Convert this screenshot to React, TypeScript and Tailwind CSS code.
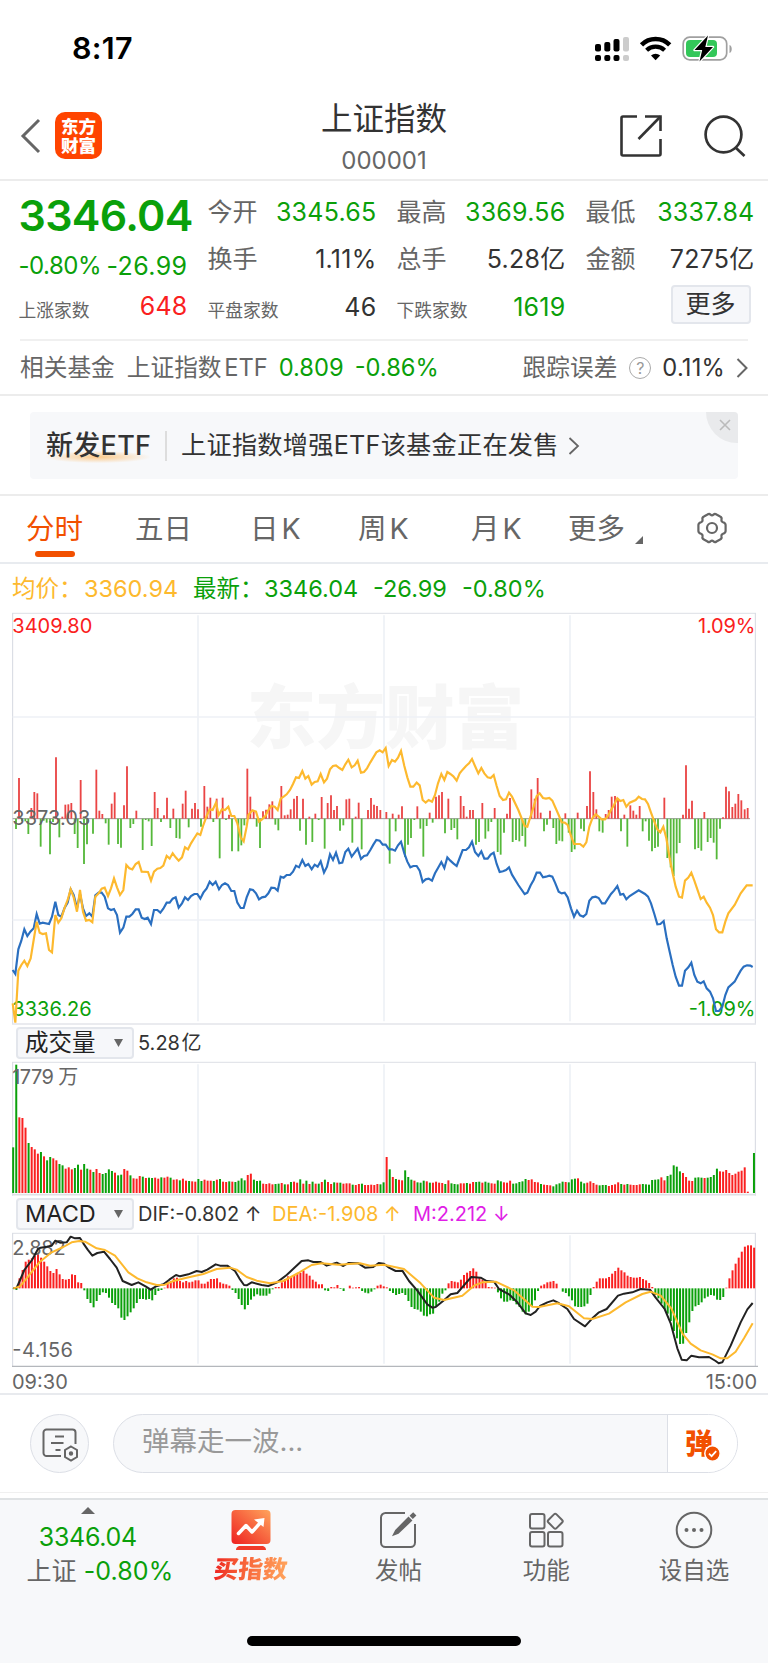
import React from "react";

const RED = "#fa2020";
const GREEN = "#0aa00a";
const STEP = 9.26;

// Price chart, chart units are a third of a pixel
const latest =
  "38,1080 46,1092 55,1018 64,992 73,958 82,978 91,965 101,955 110,912 119,941 128,938 147,942 156,920 166,875 175,915 184,920 194,893 203,878 212,838 221,855 231,895 240,852 249,895 258,918 268,910 277,920 286,856 296,848 305,848 314,860 324,895 333,900 342,897 351,915 360,968 370,953 379,920 388,920 397,912 407,898 416,898 425,923 434,927 443,923 453,942 462,900 472,900 481,908 490,896 500,878 509,878 518,866 527,862 536,893 546,880 555,862 564,870 573,858 583,852 592,852 601,866 610,848 620,835 629,815 638,825 647,815 657,838 666,825 675,820 684,825 694,843 703,843 712,878 722,894 731,894 740,862 750,838 759,840 768,850 777,868 786,862 796,860 805,850 814,833 824,834 833,842 842,800 851,803 860,795 870,795 879,785 888,767 897,772 907,750 916,768 925,762 935,778 944,764 953,770 962,754 972,788 981,770 990,733 999,750 1008,728 1018,760 1027,758 1036,726 1045,716 1055,740 1064,728 1073,716 1083,747 1092,738 1101,736 1111,720 1120,704 1129,690 1139,692 1148,704 1157,704 1167,718 1176,718 1185,722 1194,706 1203,695 1213,730 1222,755 1231,772 1240,768 1250,768 1259,782 1268,816 1277,808 1286,806 1296,812 1305,790 1314,774 1324,756 1333,774 1342,742 1351,752 1360,760 1370,768 1379,744 1388,720 1398,720 1407,712 1416,695 1425,726 1435,738 1444,724 1453,746 1463,746 1472,734 1481,728 1490,762 1499,786 1509,784 1518,780 1527,772 1536,794 1555,825 1574,852 1582,848 1592,826 1601,810 1610,788 1620,788 1629,802 1638,800 1648,797 1657,800 1666,820 1676,845 1685,850 1694,848 1703,862 1713,895 1722,920 1731,902 1740,916 1750,920 1759,912 1768,872 1777,862 1787,860 1796,864 1806,880 1815,880 1824,866 1833,852 1842,842 1852,828 1861,854 1870,852 1879,868 1889,858 1916,841 1935,852 1944,860 1953,880 1963,912 1972,943 1981,942 1991,933 2000,985 2009,1025 2018,1065 2027,1100 2037,1127 2046,1127 2055,1082 2065,1072 2074,1058 2083,1095 2092,1115 2102,1120 2111,1114 2120,1135 2130,1145 2139,1165 2148,1203 2157,1203 2167,1190 2176,1155 2185,1132 2204,1115 2213,1098 2222,1082 2231,1070 2241,1066 2251,1067 2258,1071";
const average =
  "38,1180 46,1238 55,1082 64,1065 73,1052 82,1068 92,1045 101,990 110,935 119,968 128,972 138,970 147,1020 156,1027 166,915 175,938 184,925 194,893 203,870 212,838 221,862 231,905 240,840 249,905 258,932 268,930 277,937 286,860 296,850 305,836 314,833 324,858 333,835 342,805 351,832 360,855 370,840 379,765 388,775 397,778 407,762 416,756 425,785 444,786 453,812 462,785 472,776 481,774 490,767 500,738 509,746 518,730 527,742 536,752 546,742 555,712 564,718 573,700 583,684 592,670 601,675 610,645 620,618 629,598 638,600 648,578 656,615 666,598 675,600 685,590 694,618 703,618 712,640 722,682 731,694 740,650 745,615 757,601 768,605 777,635 786,628 796,618 805,600 814,588 824,590 833,600 842,566 851,560 860,553 870,540 879,522 888,502 897,504 907,483 916,506 925,498 935,524 944,516 953,514 962,492 972,517 981,506 990,478 999,468 1008,466 1018,474 1027,480 1036,463 1045,449 1055,472 1064,466 1073,452 1083,488 1092,486 1101,475 1111,457 1120,442 1129,427 1139,421 1148,427 1157,414 1166,468 1176,450 1185,455 1194,443 1203,423 1213,468 1222,502 1231,530 1240,530 1250,518 1259,526 1268,570 1277,578 1286,570 1296,575 1305,555 1314,520 1324,492 1333,510 1342,486 1351,492 1360,499 1370,512 1379,490 1388,479 1398,468 1407,460 1416,447 1425,468 1435,490 1444,474 1453,490 1463,502 1472,504 1481,495 1490,528 1499,558 1509,570 1518,568 1527,548 1536,560 1555,600 1574,648 1582,650 1592,618 1601,590 1610,558 1619,550 1629,564 1638,566 1648,564 1657,572 1676,615 1685,637 1694,638 1703,645 1713,678 1722,702 1740,702 1750,710 1759,697 1768,650 1777,625 1787,613 1796,620 1805,628 1815,628 1824,618 1833,600 1842,585 1852,565 1861,573 1870,570 1879,590 1889,578 1907,570 1916,560 1926,567 1935,568 1944,582 1953,608 1963,635 1972,658 1981,667 1990,650 1999,685 2009,745 2018,790 2027,830 2037,860 2046,863 2055,812 2065,803 2074,788 2083,812 2092,838 2102,867 2111,860 2120,878 2130,893 2139,915 2148,958 2157,967 2167,967 2176,935 2185,910 2204,885 2222,850 2240,826 2258,826";

// [offset, pairs of x and signed height]
const flow: [number, number[]][] = [
  [0, [57,122,94,32,103,80,112,76,168,184,187,6,196,42,205,43,214,47,242,116,289,147,298,24,307,14,335,45,344,79,372,40,381,157,409,24,464,80,473,32,492,10,501,63,520,30,548,45,557,84,576,30,585,47,594,28,613,98,622,36,631,63,650,60,668,63,687,12,742,150,751,66,761,24]],
  [0, [48,-31,66,-8,76,-8,85,-46,122,-84,131,-6,140,-12,150,-107,159,-10,178,-56,224,-46,233,-88,252,-136,261,-77,279,-45,317,-14,326,-78,354,-76,363,-87,391,-28,400,-16,428,-94,437,-4,446,-8,455,-82,483,-10,511,-28,529,-58,539,-60,566,-26,603,-24,640,-10,659,-119,678,-4,696,-98,715,-98,724,-80,733,-20]],
  [768, [21,22,30,27,40,43,49,52,76,98,86,10,95,12,104,28,114,60,123,68,141,60,160,6,178,15,197,65,215,47,225,70,234,26,243,38,271,58,280,60,299,6,308,48,336,26,345,62,354,42,363,38,373,26,391,20,410,15,428,12,438,37,484,37,521,18,540,66,549,70,558,80,577,60,614,68,623,38,632,6,642,26,651,26,679,47,716,32,753,15,762,62]],
  [768, [2,-24,12,-88,58,-18,67,-35,132,-36,150,-78,169,-70,188,-4,206,-90,252,-36,262,-20,289,-72,317,-92,401,-135,419,-38,447,-115,456,-78,465,-58,475,-4,493,-30,502,-114,512,-22,530,-12,567,-44,586,-34,595,-28,604,-62,660,-78,669,-70,688,-60,697,-38,706,-10,725,-100,734,-108,744,-42]],
  [1536, [58,88,68,60,77,122,86,18,114,24,160,16,197,18,225,38,234,142,244,80,253,28,281,14,290,26,299,66,309,68,318,60,337,12,355,40,364,24,373,12,383,38,457,63,513,12,522,160,531,30,540,54,577,20,633,4,642,96,651,82,661,35,670,45,679,74,688,55,698,28,707,32]],
  [1536, [2,-70,12,-64,22,-68,31,-52,40,-84,96,-38,105,-18,124,-28,133,-76,142,-66,151,-68,170,-42,179,-100,188,-92,207,-30,216,-38,262,-38,272,-42,327,-38,346,-84,392,-38,401,-8,411,-66,420,-98,429,-88,438,-84,466,-118,476,-146,485,-172,494,-104,503,-73,549,-92,559,-88,568,-96,587,-70,596,-58,605,-72,614,-122,624,-30]],
];

// r = up minute, g = down minute
const volume =
  "g137 g385 r227 r225 r196 g150 r138 r131 r118 g123 r110 g98 g108 r104 r98 g87 g83 r73 r77 r71 g75 g85 r70 g87 g73 r70 g63 r72 r60 g57 g60 g71 g66 r61 g53 g55 r72 r67 g53 r44 r43 r51 g49 r45 g46 g45 r46 r43 g47 r46 r49 g46 r40 r41 g38 r43 r37 g36 r35 r34 g42 g36 r40 r37 r37 g36 r40 g42 r34 r33 g35 r34 g33 g37 g44 g38 r54 r58 g40 g36 g37 r28 r27 r29 r26 g27 g28 r30 g26 r26 g33 r34 r31 g41 r28 g37 r27 g34 r28 g28 r33 g40 r33 r27 g32 r31 g31 r28 r29 r29 g25 r24 r27 g28 r24 r24 r25 r24 r27 g26 g32 r108 g71 r48 g42 r40 r38 g68 g48 g40 r37 g32 g31 g37 r35 g31 r31 r34 r31 r30 g27 r38 g29 g27 g26 r29 r29 g30 r28 r33 g33 g34 r31 g34 g31 r29 r28 g38 g35 r32 r31 r37 g28 g29 g33 g35 g42 r39 r41 r33 r32 g27 r25 r24 r23 g20 g26 g29 g34 r33 g32 g41 g43 r44 g34 g29 r31 r35 r30 r25 g23 g24 g24 r21 r24 r26 r32 g27 r25 g27 r25 r24 r24 r26 g27 g26 g25 g39 g40 g41 r47 r38 g51 g55 g83 g79 g65 r60 r48 r37 r36 g46 g47 g46 r45 g46 g48 g54 g73 r65 r64 r69 r60 r54 r58 r64 r67 r77 r4 r0 g120";

const macd = [
  -1, -5, 30, 55, 80, 86, 90, 98, 102, 92, 80, 66, 52, 46, 58, 42, 28, 26, 28, 42, 40, 18, 16, -6, -32, -44, -57, -38, -20, -12, -14, -28, -44, -50, -60, -88, -95, -84, -72, -60, -44, -32, -32, -34, -32, -36, -20, -8, -5, 2, 18, 22, 30, 32, 22, 18, 22, 18, 20, 24, 24, 14, 14, 20, 28, 28, 30, 18, 14, 12, 8, -5, -14, -32, -50, -63, -50, -34, -24, -18, -22, -22, -22, -16, -3, 4, 4, 18, 28, 36, 36, 40, 46, 46, 53, 44, 38, 26, 20, 12, 12, -6, -8, 4, 3, 10, -2, -8, 0, 8, 2, 3, 4, -8, -13, -15, -10, -3, 8, 11,
  6, 3, -8, -14, -20, -17, -14, -20, -38, -56, -62, -64, -70, -82, -84, -78, -76, -56, -40, -16, -6, 15, 22, 20, 18, 26, 40, 47, 52, 60, 50, 32, 26, 16, 4, 3, 2, -12, -30, -40, -40, -36, -38, -48, -56, -70, -78, -70, -54, -36, -8, 8, 12, 18, 20, 22, 14, 0, -10, -14, -24, -36, -54, -56, -56, -54, -46, -20, 4, 20, 30, 30, 30, 34, 44, 52, 62, 54, 48, 38, 34, 32, 32, 34, 28, 24, 16, 4, -20, -30, -46, -62, -76, -98, -128, -150, -167, -166, -134, -102, -68, -54, -50, -42, -30, -25, -20, -22, -34, -35, -26, 2, 30, 54, 74, 92, 110, 125, 129, 129, 122,
];
const dif =
  "40,790 50,788 59,768 73,735 96,705 114,672 122,668 140,665 155,662 166,647 180,653 200,652 212,635 225,640 240,639 250,655 263,674 277,692 292,684 312,680 330,702 350,728 368,768 395,780 415,772 438,785 452,794 468,784 490,778 508,764 528,750 540,754 565,748 590,738 605,741 622,734 647,718 660,722 682,722 705,738 718,760 732,780 740,781 755,772 785,780 805,783 830,773 860,750 888,724 905,708 925,706 940,711 962,711 980,722 1010,713 1030,723 1045,714 1075,715 1095,728 1120,726 1136,714 1152,716 1167,728 1187,738 1207,737 1227,768 1252,797 1282,838 1297,848 1307,846 1332,826 1352,808 1372,804 1397,775 1414,756 1442,758 1460,768 1482,770 1497,792 1527,808 1552,832 1577,865 1592,870 1607,860 1620,843 1642,832 1660,826 1674,833 1702,852 1722,882 1755,904 1777,880 1797,862 1820,852 1854,812 1872,806 1897,802 1922,792 1950,794 1967,818 1994,852 2012,895 2032,970 2045,1004 2060,1006 2074,992 2097,997 2127,996 2147,1008 2156,1015 2167,1012 2192,962 2222,892 2242,853 2258,834";
const dea =
  "40,790 60,784 80,760 120,710 155,682 190,666 215,652 238,648 255,650 290,670 315,675 345,692 385,742 412,760 440,772 470,780 495,779 520,768 560,758 610,747 650,732 690,728 710,734 740,756 770,767 810,775 850,768 895,744 935,720 965,715 1015,719 1080,715 1110,722 1152,719 1212,732 1262,775 1302,818 1332,825 1387,812 1422,782 1447,772 1487,770 1542,796 1597,845 1617,846 1672,835 1707,844 1752,880 1777,882 1827,866 1877,832 1927,807 1952,800 1982,812 2014,850 2047,925 2072,956 2102,976 2137,988 2162,1000 2182,1000 2207,980 2232,940 2258,895";

const tabs = [
  { label: "分时", className: "w-[57px] ml-[26px] text-[#f25000]" },
  { label: "五日", className: "w-[57px] ml-[52px]" },
  { label: "日 K", className: "w-[50px] ml-[58px]" },
  { label: "周 K", className: "w-[54px] ml-[58px]" },
  { label: "月 K", className: "w-[52px] ml-[59px]" },
  { label: "更多", className: "w-[58px] ml-[45px]" },
];

const StatusIcons = () => (
  <svg className="mr-[35px] h-[28px] w-[140px]" viewBox="0 0 140 28" fill="none">
    {/* signal */}
    <g fill="#000">
      <rect x="2" y="9" width="6" height="7.5" rx="2" />
      <rect x="11.3" y="7" width="6" height="9.500" rx="2" />
      <rect x="20.500" y="4" width="6" height="12.500" rx="2" />
      <rect x="2" y="20" width="6" height="6" rx="2" />
      <rect x="11.300" y="20" width="6" height="6" rx="2" />
      <rect x="20.500" y="20" width="6" height="6" rx="2" />
    </g>
    <rect x="30" y="2" width="6" height="14.500" rx="2" fill="#ccc" />
    <rect x="30" y="20" width="6" height="6" rx="2" fill="#ccc" />
    {/* wifi */}
    <path d="M48.500 9.800a20 20 0 0 1 28.200 0" stroke="#000" strokeWidth="4.600" />
    <path d="M53.600 15.200a13 13 0 0 1 18 0" stroke="#000" strokeWidth="4.200" />
    <path d="M62.600 25.200l-4.600-4.700a6.600 6.600 0 0 1 9.200 0z" fill="#000" />
    {/* battery */}
    <rect x="90.200" y="2.200" width="43.500" height="22.600" rx="6.500" stroke="#a0a0a0" strokeWidth="1.700" />
    <path d="M136.500 10v8c3-1 3-7 0-8z" fill="#a0a0a0" />
    <rect x="93" y="5" width="31" height="17" rx="4" fill="#33c759" />
    <path
      d="M115 .5l-13.500 14.600h7.700L106.500 26.500 120 12h-7.700z"
      fill="#000"
      stroke="#fff"
      strokeWidth="2.400"
      paintOrder="stroke"
      strokeLinejoin="round"
    />
  </svg>
);

const Header = () => (
  <header className="grid h-[97px] grid-cols-3 items-center border-b-2 border-[#ececec]">
    <div className="flex items-center pl-[20px] pt-[8px]">
      <svg className="h-[36px] w-[21px]" viewBox="0 0 21 36" fill="none">
        <path d="M19 2L3 18l16 16" stroke="#666" strokeWidth="3" />
      </svg>
      <div className="ml-[14px] flex size-[47px] flex-col items-center justify-center rounded-[10px] bg-[#ff4400] text-[17.5px] font-black leading-[19px] text-white">
        <span>东方</span>
        <span>财富</span>
      </div>
    </div>
    <div className="flex flex-col items-center pt-[12px]">
      <h1 className="text-[31.500px] leading-[40px] text-[#333]">上证指数</h1>
      <p className="mt-[7px] text-[24px] leading-[30px] text-[#666]">000001</p>
    </div>
    <div className="flex justify-end pr-[22px] pt-[8px]">
      <svg className="mr-[41px] h-[44px] w-[44px]" viewBox="0 0 44 44" fill="none" stroke="#333" strokeWidth="2.600">
        <path d="M18 2.500H4a1.500 1.500 0 0 0-1.500 1.500v36A1.500 1.500 0 0 0 4 41.500h36a1.500 1.500 0 0 0 1.500-1.500V25" />
        <path d="M26 2.500h15.500V17" />
        <path d="M41.500 2.500L19.500 25" />
      </svg>
      <svg className="h-[44px] w-[42px]" viewBox="0 0 42 44" fill="none" stroke="#333" strokeWidth="2.700">
        <circle cx="19.500" cy="20.500" r="17.900" />
        <path d="M31.500 33.500l9 8.500" />
      </svg>
    </div>
  </header>
);

const Quote = ({ label, value, className = "text-[#333]", small = false }: { label: string; value: string; className?: string; small?: boolean }) => (
  <div className="flex h-[47.300px] items-center justify-between whitespace-nowrap leading-none">
    <span className={small ? "mt-[8px] text-[17.800px] text-[#666]" : "text-[25px] text-[#666]"}>{label}</span>
    <span className={`text-[25px] tracking-[0.25px] ${className}`}>{value}</span>
  </div>
);

const Quotes = () => (
  <section className="h-[215px] border-b-2 border-[#ececec]">
    <div className="grid h-[158px] grid-cols-[169px_169px_169px_169px] gap-x-5 pl-[18.500px] pt-[8px]">
      <div className="whitespace-nowrap text-[#0aa00a]">
        <div className="h-[56px] text-[43px] font-semibold leading-[53px] tracking-[-0.700px]">3346.04</div>
        <div className="flex h-[38px] items-center justify-between pt-[4px] text-[25px] leading-none">
          <span className="text-[24px] tracking-[-0.500px]">-0.80%</span>
          <span className="tracking-[0.400px]">-26.99</span>
        </div>
        <Quote label="上涨家数" value="648" className="text-[#fa2020]" small />
      </div>
      <div>
        <Quote label="今开" value="3345.65" className="text-[#0aa00a]" />
        <Quote label="换手" value="1.11%" />
        <Quote label="平盘家数" value="46" small />
      </div>
      <div>
        <Quote label="最高" value="3369.56" className="text-[#0aa00a]" />
        <Quote label="总手" value="5.28亿" />
        <Quote label="下跌家数" value="1619" className="text-[#0aa00a]" small />
      </div>
      <div>
        <Quote label="最低" value="3337.84" className="text-[#0aa00a]" />
        <Quote label="金额" value="7275亿" />
        <div className="mr-[4px] mt-[1px] flex justify-end">
          <button className="h-[39px] w-[80px] rounded-[4px] border-2 border-[#e3e6ec] bg-[#f6f7fa] text-[25px] leading-none text-[#333]">更多</button>
        </div>
      </div>
    </div>
    <div className="mx-5 flex h-[55px] items-center border-t-2 border-[#f0f0f0] text-[23.700px] leading-none text-[#666]">
      <span>相关基金</span>
      <span className="ml-[12px] whitespace-nowrap [word-spacing:-4px]">上证指数 ETF</span>
      <span className="ml-[11px] text-[#0aa00a]">0.809</span>
      <span className="ml-[11px] text-[#0aa00a]">-0.86%</span>
      <span className="ml-auto">跟踪误差</span>
      <span className="ml-[12px] flex size-[22px] items-center justify-center rounded-full border-[1.500px] border-[#aaa] text-[16px] text-[#999]">?</span>
      <span className="ml-[11px] tracking-[0.200px] text-[#333]">0.11%</span>
      <svg className="ml-[11px] h-[20px] w-[12px]" viewBox="0 0 12 20" fill="none">
        <path d="M1.500 1l9 9-9 9" stroke="#666" strokeWidth="2" />
      </svg>
    </div>
  </section>
);

const Banner = () => (
  <section className="h-[100px] border-b-2 border-[#ececec] pl-[30px] pt-[16px]">
    <div className="relative flex h-[67px] w-[708px] items-center overflow-hidden rounded-[4px] bg-[#f7f8fa] pl-[16px] text-[25.200px] leading-none text-[#333]">
      <div className="absolute left-[16px] top-[39px] h-[12px] w-[104px] bg-[radial-gradient(ellipse_at_center,#fbc98a_0%,#f7f8fa_72%)]" />
      <span className="relative w-[105px] whitespace-nowrap text-[27px] font-medium tracking-[0.300px]">新发ETF</span>
      <span className="ml-[14px] h-[30px] w-[2px] bg-[#ddd]" />
      <span className="ml-[14px] whitespace-nowrap tracking-[0.250px]">上证指数增强ETF该基金正在发售</span>
      <svg className="ml-[9px] h-[18px] w-[12px]" viewBox="0 0 12 18" fill="none">
        <path d="M1.500 1l8.500 8-8.500 8" stroke="#666" strokeWidth="1.800" />
      </svg>
      <div className="absolute right-0 top-0 flex h-[31px] w-[32px] items-center justify-center rounded-bl-full bg-[#e9eaec] pb-[5px] pl-[5px]">
        <svg className="size-[12px]" viewBox="0 0 12 12" stroke="#bbb" strokeWidth="1.600">
          <path d="M1 1l10 10M11 1L1 11" />
        </svg>
      </div>
    </div>
  </section>
);

const Tabs = () => (
  <nav className="flex h-[68px] items-center border-b-2 border-[#e8ebef] text-[28.500px] leading-none text-[#666]">
    {tabs.map((tab, index) => (
      <div key={tab.label} className={`relative shrink-0 whitespace-nowrap [word-spacing:-5px] ${tab.className}`}>
        {tab.label}
        {index === 0 && <span className="absolute -bottom-[14px] left-[9px] h-[6px] w-[40px] rounded-[3px] bg-[#f25000]" />}
      </div>
    ))}
    <svg className="ml-[9px] mt-[21px] size-[8px]" viewBox="0 0 8 8">
      <path d="M8 0v8H0z" fill="#666" />
    </svg>
    <svg className="-mt-[2px] ml-[52px] size-[34px]" viewBox="0 0 34 34" fill="none" stroke="#666" strokeWidth="2.200">
      <path
        d="M12.500 3.500q1.800-1.300 3 .2 1.500 1.300 3 0 1.200-1.500 3-.2l3.600 2q2 1 1.400 3-.4 2 1.500 2.800 2.600.7 2.600 2.700v6q0 2-2.600 2.700-1.900.8-1.500 2.800.6 2-1.400 3l-3.600 2q-1.800 1.300-3-.2-1.500-1.300-3 0-1.200 1.500-3 .2l-3.600-2q-2-1-1.400-3 .4-2-1.500-2.800Q3.400 22 3.400 20v-6q0-2 2.600-2.700 1.900-.8 1.500-2.800-.6-2 1.400-3z"
        strokeLinejoin="round"
      />
      <circle cx="17" cy="17" r="5" />
    </svg>
  </nav>
);

const Grid = ({ top, bottom }: { top: number; bottom: number }) => (
  <g stroke="#eef1f6" strokeWidth="5">
    <path d={`M594 ${top + 6}V${bottom - 8}M1152 ${top + 6}V${bottom - 8}M1710 ${top + 6}V${bottom - 8}`} />
    <path d={`M36 ${top}H2268`} stroke="#e3e5ea" strokeWidth="4" />
    <path d={`M38 ${top}V${bottom}M2266 ${top}V${bottom}`} stroke="#d5d8e0" strokeWidth="3" />
  </g>
);

const PriceChart = () => (
  <svg className="block h-[415px] w-[768px]" viewBox="0 0 2304 1245" fill="none">
    <text x="740" y="400" fontSize="208" fontWeight="900" fill="#f6f6f6" textLength="832">东方财富</text>
    <Grid top={10} bottom={1242} />
    <path d="M38 321H2266M38 930H2266" stroke="#eef1f6" strokeWidth="5" />
    <path d="M36 1242H2268" stroke="#e3e5ea" strokeWidth="4" />
    <path d="M38 626H2250" stroke="#999" strokeWidth="3" />
    {flow.map(([offset, data], i) =>
      data.map((x, j) =>
        j % 2 === 0 ? (
          <path key={`${i}-${j}`} d={`M${offset + x} 626v${-data[j + 1]}`} stroke={data[j + 1] > 0 ? "#ea4545" : "#55b83a"} strokeWidth="5.500" />
        ) : null
      )
    )}
    <g fontSize="60">
      <text x="37" y="68" fill={RED} textLength="240">3409.80</text>
      <text x="2266" y="68" fill={RED} textAnchor="end" textLength="172">1.09%</text>
      <text x="37" y="644" fill="#666" textLength="234">3373.03</text>
      <text x="37" y="1218" fill={GREEN} textLength="238">3336.26</text>
      <text x="2266" y="1218" fill={GREEN} textAnchor="end" textLength="200">-1.09%</text>
    </g>
    <polyline points={latest} stroke="#2a6fc0" strokeWidth="6.500" />
    <polyline points={average} stroke="#fdb92e" strokeWidth="6.500" />
  </svg>
);

const VolumeChart = () => (
  <svg className="block h-[136px] w-[768px]" viewBox="0 105 2304 408" fill="none">
    <Grid top={112} bottom={512} />
    <path d="M36 509H2268" stroke="#dfe1e6" strokeWidth="5" />
    {volume.split(" ").map((bar, i) => (
      <path key={i} d={`M${39.5 + i * STEP} 504v-${bar.slice(1)}`} stroke={bar[0] === "r" ? RED : GREEN} strokeWidth="6" />
    ))}
    <text x="37" y="177" fontSize="60" fill="#666" textLength="198">1779 万</text>
  </svg>
);

const MacdChart = () => (
  <svg className="block h-[137px] w-[768px]" viewBox="0 618 2304 411" fill="none">
    <Grid top={625} bottom={1024} />
    <path d="M36 1024H2274" stroke="#b4b7bc" strokeWidth="4" />
    {macd.map((value, i) => (
      <path key={i} d={`M${40 + i * STEP} 790v${-value}`} stroke={value > 0 ? RED : GREEN} strokeWidth="6" />
    ))}
    <g fontSize="60" fill="#666">
      <text x="37" y="690" textLength="160">2.882</text>
      <text x="37" y="997" textLength="182">-4.156</text>
    </g>
    <polyline points={dif} stroke="#222" strokeWidth="6" strokeLinejoin="round" />
    <polyline points={dea} stroke="#fdb92e" strokeWidth="6" strokeLinejoin="round" />
  </svg>
);

const Selector = ({ label }: { label: string }) => (
  <button className="flex h-[32px] w-[118px] items-center justify-between rounded-[4px] border-2 border-[#e3e6ec] bg-[#f6f7fa] pl-[7px] pr-[9px] text-[23.500px] leading-none text-[#222]">
    <span>{label}</span>
    <svg className="h-[8px] w-[9px]" viewBox="0 0 9 8">
      <path d="M0 0h9L4.500 8z" fill="#666" />
    </svg>
  </button>
);

const Charts = () => (
  <section className="text-[20px] leading-none">
    <div className="flex h-[46px] items-center whitespace-nowrap pl-[12px] pt-[4px] text-[23.500px] text-[#0aa00a]">
      <span className="w-[72px] text-[#fdb92e]">均价：</span>
      <span className="w-[109px] text-[#fdb92e]">3360.94</span>
      <span className="w-[71px]">最新：</span>
      <span className="w-[109px]">3346.04</span>
      <span className="w-[89px]">-26.99</span>
      <span>-0.80%</span>
    </div>
    <PriceChart />
    <div className="flex h-[35px] items-center gap-[4px] pl-[16px] text-[#333]">
      <Selector label="成交量" />
      <span className="[word-spacing:-4px]">5.28 亿</span>
    </div>
    <VolumeChart />
    <div className="flex h-[35px] items-center whitespace-nowrap pl-[16px]">
      <Selector label="MACD" />
      <span className="ml-[4px] w-[134px] text-[#333]">DIF:-0.802 ↑</span>
      <span className="w-[141px] text-[#fdb92e]">DEA:-1.908 ↑</span>
      <span className="text-[#e01ee6]">M:2.212 ↓</span>
    </div>
    <MacdChart />
    <div className="flex h-[27px] items-center justify-between border-b-2 border-[#e8eaee] pl-[12px] pr-[11px] pt-[2px] text-[#666]">
      <span>09:30</span>
      <span>15:00</span>
    </div>
  </section>
);

const Danmaku = () => (
  <section className="flex h-[98px] items-center border-b border-[#f0f0f0] pl-[30px]">
    <div className="flex size-[59px] items-center justify-center rounded-full border-[1.500px] border-[#dcdfe6] bg-[#f7f8fa]">
      <svg className="mt-[2px] h-[34px] w-[36px]" viewBox="0 0 36 34" fill="none" stroke="#666" strokeWidth="2">
        <path d="M19 28H4.500A3 3 0 0 1 1.500 25V4.500a3 3 0 0 1 3-3h26a3 3 0 0 1 3 3V16" />
        <path d="M13 8.500h9M9 15h12.500M13.500 22h5" />
        <path d="M29 18.500l6 3.500v7l-6 3.500-6-3.500v-7z" />
        <circle cx="29" cy="25.500" r="1.200" fill="#666" />
      </svg>
    </div>
    <div className="ml-[24px] flex h-[59px] w-[625px] overflow-hidden rounded-full border-[1.500px] border-[#dcdfe6] bg-[#f7f8fa]">
      <div className="flex-1 pl-[28px] text-[27.500px] leading-[52px] text-[#999]">弹幕走一波...</div>
      <div className="flex w-[70px] items-center border-l-[1.500px] border-[#dcdfe6] bg-white pl-[17px]">
        <div className="relative text-[28px] font-black leading-none text-[#f25000]">
          弹
          <svg className="absolute -right-[8px] -bottom-[4px] size-[17px]" viewBox="0 0 17 17" fill="none">
            <circle cx="8.500" cy="8.500" r="7.700" fill="#f25000" stroke="#fff" strokeWidth="1.500" />
            <path d="M5 8.700l2.600 2.500 4.600-5" stroke="#fff" strokeWidth="1.700" />
          </svg>
        </div>
      </div>
    </div>
  </section>
);

const NavItem = ({ label, children }: { label: string; children: React.ReactNode }) => (
  <div className="flex w-[148px] flex-col items-center text-[23.500px] leading-none text-[#666]">
    <div className="mt-[11px] h-[42px]">{children}</div>
    <span className="mt-[6px]">{label}</span>
  </div>
);

const BottomBar = () => (
  <footer className="mt-[5px] h-[167px] border-t-2 border-[#dfe2e4] bg-[#f7f8fa]">
    <div className="flex h-[136px]">
      <div className="flex w-[176px] flex-col items-center whitespace-nowrap text-[25px] leading-none tracking-[-0.300px] text-[#0aa00a]">
        <svg className="mt-[7px] h-[7px] w-[14px]" viewBox="0 0 14 7">
          <path d="M7 0l7 7H0z" fill="#666" />
        </svg>
        <span className="mt-[11px]">3346.04</span>
        <span className="mt-[9px] ml-[24px] tracking-[0.100px]">
          <span className="text-[#666]">上证</span> -0.80%
        </span>
      </div>
      <div className="flex w-[149px] flex-col items-center pl-[1px]">
        <svg className="mt-[10px] h-[40px] w-[40px]" viewBox="0 0 40 40">
          <defs>
            <linearGradient id="hot" x1="0" y1="1" x2="1" y2="0">
              <stop offset="0" stopColor="#ee2020" />
              <stop offset="1" stopColor="#ffa45c" />
            </linearGradient>
          </defs>
          <rect x=".5" y="0" width="39" height="34" rx="4" fill="url(#hot)" />
          <path d="M8 36h24q3 1 3 4H5q0-3 3-4z" fill="#f03a2a" />
          <path d="M7.500 23.500l7.500-8 6 6.500 9-10" fill="none" stroke="#fff" strokeWidth="3.500" strokeLinejoin="round" strokeLinecap="round" />
          <path d="M23 9.500l10.500-1.500-1 9z" fill="#fff" />
        </svg>
        <span className="mt-[7px] -skew-x-6 bg-linear-to-r from-[#ee2020] to-[#ffa45c] bg-clip-text text-[24.500px] font-black leading-[24px] text-transparent">
          买指数
        </span>
      </div>
      <NavItem label="发帖">
        <svg className="size-[38px]" viewBox="0 0 38 38" fill="none" stroke="#666" strokeWidth="2">
          <path d="M26 2H6.500A4.500 4.500 0 0 0 2 6.500v25A4.500 4.500 0 0 0 6.500 36h25a4.500 4.500 0 0 0 4.500-4.500V13" />
          <path d="M15 23.500l2-4L29.500 7l2.500 2.500L19 22z" fill="#666" />
          <path d="M32 4.800l2.200-2.200 1.800 1.800-2.200 2.200z" fill="#666" />
        </svg>
      </NavItem>
      <NavItem label="功能">
        <svg className="size-[38px]" viewBox="0 0 38 38" fill="none" stroke="#666" strokeWidth="2">
          <rect x="3" y="3" width="14.500" height="14.500" rx="2" />
          <rect x="3" y="21" width="14.500" height="14.500" rx="2" />
          <rect x="21" y="21" width="14.500" height="14.500" rx="2" />
          <rect x="22.500" y="4.500" width="11.500" height="11.500" rx="1.800" transform="rotate(45 28.250 10.250)" />
        </svg>
      </NavItem>
      <NavItem label="设自选">
        <svg className="size-[38px]" viewBox="0 0 38 38" fill="none">
          <circle cx="19" cy="19" r="17.300" stroke="#666" strokeWidth="2" />
          <g fill="#666">
            <circle cx="11.500" cy="19" r="2" />
            <circle cx="19" cy="19" r="2" />
            <circle cx="26.500" cy="19" r="2" />
          </g>
        </svg>
      </NavItem>
    </div>
    <div className="mx-auto h-[10px] w-[274px] rounded-full bg-black" />
  </footer>
);

export default function App() {
  return (
    <main className="h-[1663px] w-[768px] overflow-hidden bg-white font-['Inter','Noto_Sans_CJK_SC',sans-serif]">
      {/* Status bar */}
      <div className="flex h-[84px] items-center justify-between pt-[13px]">
        <span className="ml-[72px] text-[30.500px] font-semibold leading-none tracking-[0.300px] text-black">8:17</span>
        <StatusIcons />
      </div>
      <Header />
      <Quotes />
      <Banner />
      <Tabs />
      <Charts />
      <Danmaku />
      <BottomBar />
    </main>
  );
}
